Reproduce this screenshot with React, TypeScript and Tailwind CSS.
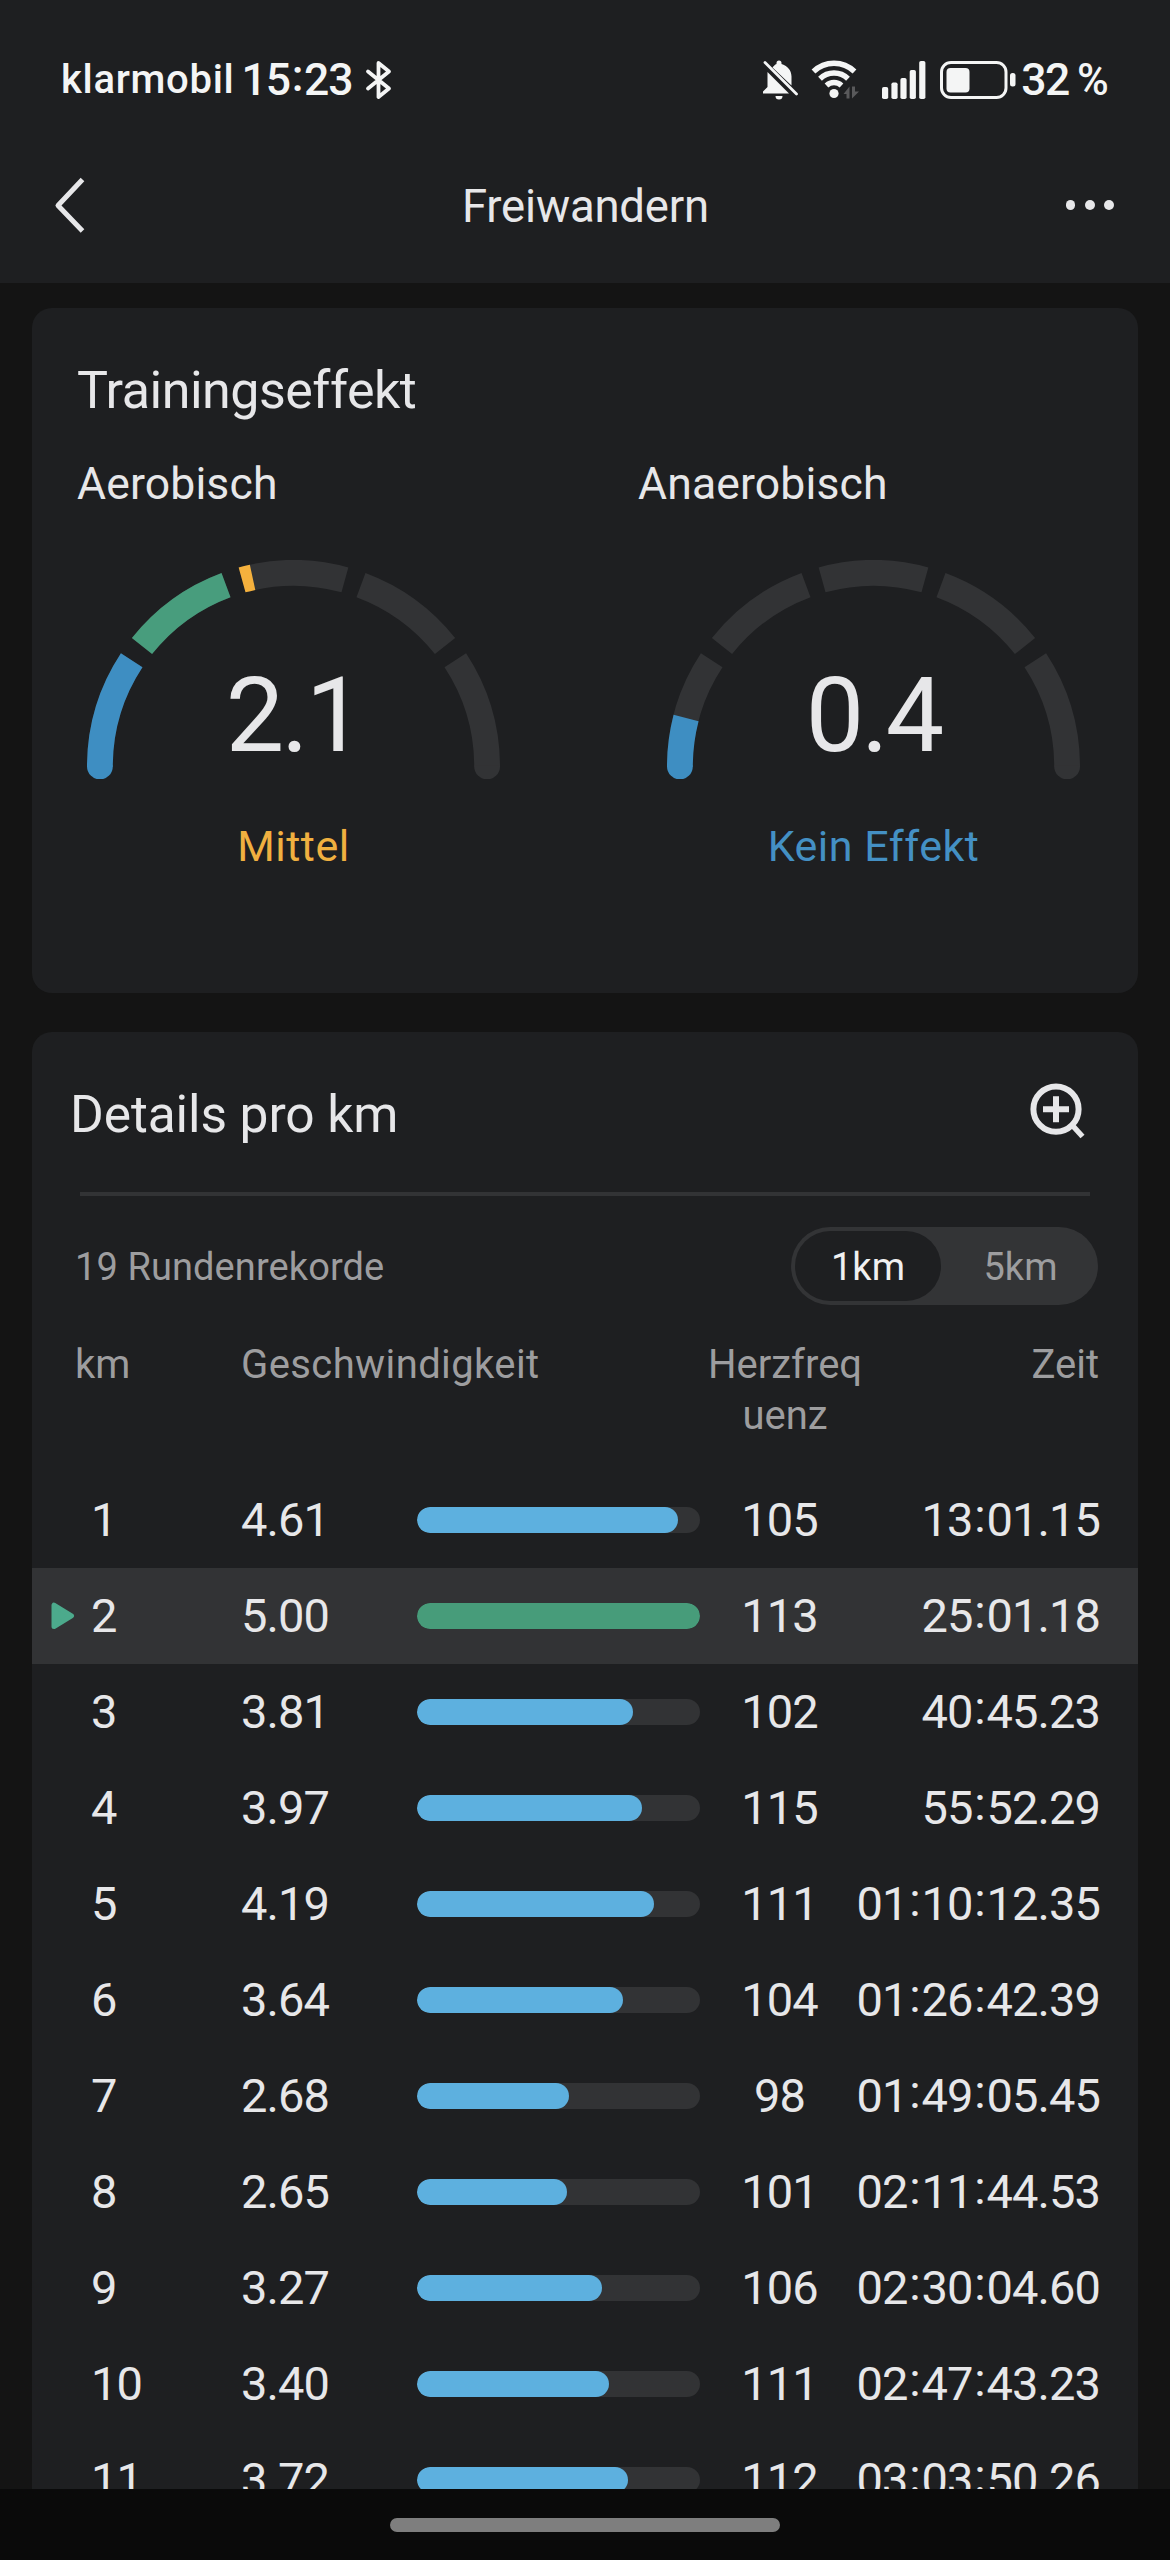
import React from 'react';

type Lap = { km: number; speed: string; heart: number; time: string; best?: boolean };

const laps: Lap[] = [
  { km: 1, speed: '4.61', heart: 105, time: '13:01.15' },
  { km: 2, speed: '5.00', heart: 113, time: '25:01.18', best: true },
  { km: 3, speed: '3.81', heart: 102, time: '40:45.23' },
  { km: 4, speed: '3.97', heart: 115, time: '55:52.29' },
  { km: 5, speed: '4.19', heart: 111, time: '01:10:12.35' },
  { km: 6, speed: '3.64', heart: 104, time: '01:26:42.39' },
  { km: 7, speed: '2.68', heart: 98, time: '01:49:05.45' },
  { km: 8, speed: '2.65', heart: 101, time: '02:11:44.53' },
  { km: 9, speed: '3.27', heart: 106, time: '02:30:04.60' },
  { km: 10, speed: '3.40', heart: 111, time: '02:47:43.23' },
  { km: 11, speed: '3.72', heart: 112, time: '03:03:50.26' },
];

/* Gauge geometry: half circle of five segments, angles measured from the left end. */
const CX = 206.5;
const CY = 206.5;
const OUTER = 206.5;
const INNER = 180.7;
const TRACK = '#323335';
const SEGMENTS: [number, number][] = [
  [0, 33.3],
  [38.5, 69.6],
  [74.6, 105.4],
  [110.4, 141.5],
  [146.7, 180],
];

function point(r: number, deg: number) {
  const a = (deg * Math.PI) / 180;
  return `${(CX - r * Math.cos(a)).toFixed(2)} ${(CY - r * Math.sin(a)).toFixed(2)}`;
}

function arc(from: number, to: number) {
  return `M${point(OUTER, from)}A${OUTER} ${OUTER} 0 0 1 ${point(OUTER, to)}L${point(INNER, to)}A${INNER} ${INNER} 0 0 0 ${point(INNER, from)}Z`;
}

type Fill = { from: number; to: number; color: string };

function Gauge({ value, label, labelClass, fills }: { value: string; label: string; labelClass: string; fills: Fill[] }) {
  return (
    <div className="flex w-[413px] flex-col items-center">
      <div className="relative h-[219px] w-[413px]">
        <svg width="413" height="219" viewBox="0 0 413 219" className="block overflow-hidden">
          {SEGMENTS.map(([a, b]) => (
            <path key={a} d={arc(a, b)} fill={TRACK} />
          ))}
          {fills.map((f) => (
            <path key={f.from} d={arc(f.from, f.to)} fill={f.color} />
          ))}
          <path d="M0 205.500H25.800V206.500A12.900 12.900 0 0 1 0 206.500Z" fill={fills[0].color} />
          <path d="M387.200 205.500H413V206.500A12.900 12.900 0 0 1 387.200 206.500Z" fill={TRACK} />
        </svg>
        <div className="absolute inset-x-0 top-[96px] text-center text-[104px] leading-[120px] tracking-[-3px]">{value}</div>
      </div>
      <div className={`mt-[42px] text-[43px] leading-[50px] tracking-[0.5px] ${labelClass}`}>{label}</div>
    </div>
  );
}

function Digits({ text }: { text: string }) {
  return (
    <>
      {text.split('').map((c, i) =>
        c === ':' ? (
          <span key={i} className="relative -top-[4px] inline-block w-[14px] text-center">
            :
          </span>
        ) : (
          <span key={i}>{c}</span>
        ),
      )}
    </>
  );
}

function StatusBar() {
  return (
    <div className="flex h-[160px] items-start justify-between pl-[61px] pr-[61px] pt-[54px] text-[#f4f5f5]">
      <div className="flex h-[52px] items-center font-medium">
        <span className="text-[40px] leading-[50px] tracking-[0.7px]">klarmobil</span>
        <span className="ml-[7px] text-[44.5px] leading-[52px] tracking-[-1px]">
          <Digits text="15:23" />
        </span>
        <svg width="28" height="40" viewBox="0 0 28 40" className="ml-[12px]" fill="none" stroke="currentColor" strokeWidth="3.8" strokeLinecap="round" strokeLinejoin="round">
          <path d="M3 11.500L24 28.500L13.500 37V3L24 11.500L3 28.500" />
        </svg>
      </div>
      <div className="flex h-[52px] items-center">
        <svg width="36" height="40" viewBox="0 0 36 40" fill="currentColor">
          <path d="M5.500 12L27 33.500H1V31.500L5.500 27ZM10.500 7.500C11.500 6 13 4.500 14.500 4V3A2.500 2.500 0 0 1 19.500 3V4C25 5.500 29.500 10 29.500 16.500V25.500Z" />
          <path d="M13.500 36H20.500A3.500 3.500 0 0 1 13.500 36Z" />
          <path d="M3 2.500L34.500 34" stroke="currentColor" strokeWidth="2.800" strokeLinecap="round" />
        </svg>
        <svg width="50" height="40" viewBox="0 0 50 40" className="ml-[13px]" fill="none" stroke="currentColor" strokeWidth="5.400">
          <path d="M2.500 11.500A29.500 29.500 0 0 1 43.500 11.500" />
          <path d="M9 18.700A20 20 0 0 1 37 18.700" />
          <path d="M15.500 25.500A11 11 0 0 1 30.500 25.500" />
          <circle cx="23" cy="33.500" r="4.600" fill="currentColor" stroke="none" />
          <path d="M32.500 34L38.500 26.500V38.500H35.500V34ZM41 26.500H44V31.500H48L41 38.500Z" fill="#59595b" stroke="none" />
        </svg>
        <svg width="44" height="40" viewBox="0 0 44 40" className="ml-[21px]" fill="currentColor">
          <rect x="0" y="27" width="6.200" height="12" rx="1.800" />
          <rect x="9.400" y="22.500" width="6.200" height="16.500" rx="1.800" />
          <rect x="18.400" y="18" width="6.200" height="21" rx="1.800" />
          <rect x="27.700" y="10" width="6.200" height="29" rx="1.800" />
          <rect x="37.200" y="1" width="6.200" height="38" rx="1.800" />
        </svg>
        <svg width="76" height="40" viewBox="0 0 76 40" className="ml-[14px]" fill="currentColor">
          <rect x="1.500" y="2.500" width="64.500" height="35" rx="9.500" fill="none" stroke="currentColor" strokeWidth="3" />
          <rect x="6.500" y="8" width="23" height="24.500" rx="4" />
          <rect x="70" y="13" width="5.500" height="13.500" rx="2.500" />
        </svg>
        <span className="ml-[5px] text-[44.5px] font-medium leading-[52px] tracking-[-1.4px]">32</span>
        <span className="ml-[8px] w-[32px] origin-left scale-x-[0.97] text-[44.5px] font-medium leading-[52px]">%</span>
      </div>
    </div>
  );
}

function TitleBar() {
  return (
    <div className="flex h-[90px] items-center justify-between pl-[54px] pr-[56px]">
      <svg width="34" height="56" viewBox="0 0 34 56" fill="none" stroke="currentColor" strokeWidth="5" strokeLinejoin="round">
        <path d="M28.500 2.500L4 28.500L28.500 54" />
      </svg>
      <h1 className="ml-[17px] mt-[4px] text-[45.5px] font-normal leading-[54px] tracking-[-0.2px]">Freiwandern</h1>
      <div className="flex gap-[9.700px]">
        <span className="size-[9.600px] rounded-full bg-current" />
        <span className="size-[9.600px] rounded-full bg-current" />
        <span className="size-[9.600px] rounded-full bg-current" />
      </div>
    </div>
  );
}

function LapRow({ lap }: { lap: Lap }) {
  return (
    <div
      className={`grid h-[96px] shrink-0 grid-cols-[59px_150px_176px_283px_159px_minmax(0,1fr)] items-center pr-[38px] text-[47px] leading-[56px] tracking-[-0.9px] ${
        lap.best ? 'bg-[#323335]' : ''
      }`}
    >
      <div className="pl-[19px]">
        {lap.best && (
          <svg width="24" height="28" viewBox="0 0 24 28" className="block" fill="#4caa8c" stroke="#4caa8c" strokeWidth="5" strokeLinejoin="round">
            <path d="M3 3.200V24.500L20.500 13.800Z" />
          </svg>
        )}
      </div>
      <div>{lap.km}</div>
      <div>{lap.speed}</div>
      <div className={`h-[26px] overflow-hidden rounded-full ${lap.best ? '' : 'bg-[#323335]'}`}>
        <div
          className={`h-full rounded-full ${lap.best ? 'bg-[#479c7a]' : 'bg-[#5db0df]'}`}
          style={{ width: `${(parseFloat(lap.speed) / 5) * 100}%` }}
        />
      </div>
      <div className="text-center">{lap.heart}</div>
      <div className="flex justify-end whitespace-nowrap">
        <div>
          <Digits text={lap.time} />
        </div>
      </div>
    </div>
  );
}

export default function App() {
  return (
    <div className="flex h-[2560px] w-[1170px] flex-col overflow-hidden bg-[#141414] font-['Roboto',sans-serif] text-[#e7e7e9]">
      <header className="h-[283px] shrink-0 bg-[#1e1f21]">
        <StatusBar />
        <TitleBar />
      </header>

      <main className="flex min-h-0 flex-1 flex-col overflow-hidden px-[32px] pt-[25px]">
        <section className="h-[685px] shrink-0 rounded-[20px] bg-[#1e1f21] pt-[53px]">
          <h2 className="pl-[45px] text-[52px] font-normal leading-[60px] tracking-[-0.5px]">Trainingseffekt</h2>
          <div className="mt-[37px] flex text-[44.5px] leading-[52px] tracking-[0.15px]">
            <div className="w-[561px] pl-[45px]">Aerobisch</div>
            <div className="pl-[45px]">Anaerobisch</div>
          </div>
          <div className="mt-[50px] flex gap-[167px] pl-[55px]">
            <Gauge
              value="2.1"
              label="Mittel"
              labelClass="text-[#f0b040]"
              fills={[
                { from: 0, to: 33.3, color: '#3e8ec2' },
                { from: 38.5, to: 69.6, color: '#489d7d' },
                { from: 74.6, to: 77.8, color: '#f5b13d' },
              ]}
            />
            <Gauge
              value="0.4"
              label="Kein Effekt"
              labelClass="text-[#4490c4]"
              fills={[{ from: 0, to: 14.5, color: '#3e8ec2' }]}
            />
          </div>
        </section>

        <section className="mt-[39px] flex h-[1500px] shrink-0 flex-col rounded-t-[20px] bg-[#1e1f21]">
          <div className="flex h-[160px] items-start justify-between pl-[38px] pr-[52px] pt-[50px]">
            <h2 className="mt-[3px] text-[51.5px] font-normal leading-[60px] tracking-[-0.1px]">Details pro km</h2>
            <svg width="58" height="58" viewBox="0 0 58 58" fill="none" stroke="currentColor" strokeWidth="6">
              <circle cx="28" cy="27.200" r="22.600" />
              <path d="M28 14.200V40.200M15 27.200H41" />
              <path d="M44 43L54.500 54.500" strokeWidth="5.500" />
            </svg>
          </div>
          <div className="mx-[48px] h-[4px] bg-[#323335]" />
          <div className="mt-[31px] flex h-[78px] items-center justify-between pl-[43px] pr-[40px] text-[38px] text-[#9d9d9f]">
            <span className="mt-[2px] leading-[46px] tracking-[0.1px]">19 Rundenrekorde</span>
            <div className="flex h-[78px] w-[307px] rounded-full bg-[#333436] p-[4px]">
              <div className="flex w-[146px] items-center justify-center rounded-full bg-[#1e1f21] pt-[2px] text-[#f0f0f1]">1km</div>
              <div className="flex flex-1 items-center justify-center pl-[6px] pt-[2px]">5km</div>
            </div>
          </div>
          <div className="mt-[34px] flex h-[133px] text-[40px] leading-[51px] text-[#9d9d9f]">
            <div className="w-[209px] pl-[43px]">km</div>
            <div className="w-[445px] tracking-[0.4px]">Geschwindigkeit</div>
            <div className="w-[198px] text-center">
              Herzfreq
              <br />
              uenz
            </div>
            <div className="flex-1 pr-[39px] text-right">Zeit</div>
          </div>
          <div className="flex flex-col">
            {laps.map((lap) => (
              <LapRow key={lap.km} lap={lap} />
            ))}
          </div>
        </section>
      </main>

      <footer className="flex h-[71px] shrink-0 items-start justify-center bg-[#0a0a0a] pt-[29px]">
        <div className="h-[14px] w-[390px] rounded-full bg-[#7e7e7e]" />
      </footer>
    </div>
  );
}
